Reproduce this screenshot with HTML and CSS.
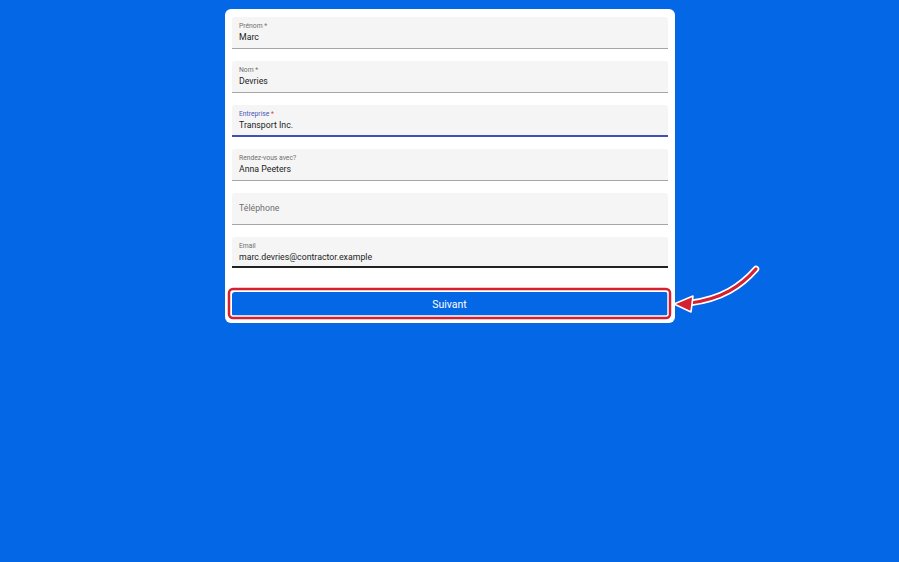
FILE: index.html
```html
<!DOCTYPE html>
<html lang="fr">
<head>
<meta charset="utf-8">
<title>Formulaire visiteur</title>
<link rel="stylesheet" href="styles.css">
</head>
<body>
<div class="page">
  <form class="card">
    <div class="field">
      <div class="label">Prénom *</div>
      <div class="value">Marc</div>
    </div>
    <div class="field">
      <div class="label">Nom *</div>
      <div class="value">Devries</div>
    </div>
    <div class="field focused">
      <div class="label">Entreprise <span class="req">*</span></div>
      <div class="value">Transport Inc.</div>
    </div>
    <div class="field">
      <div class="label">Rendez-vous avec?</div>
      <div class="value">Anna Peeters</div>
    </div>
    <div class="field empty">
      <div class="placeholder">Téléphone</div>
    </div>
    <div class="field dark">
      <div class="label">Email</div>
      <div class="value">marc.devries@contractor.example</div>
    </div>
    <button type="button" class="submit">Suivant</button>
  </form>
</div>
<svg class="annot" width="899" height="562" viewBox="0 0 899 562" aria-hidden="true">
  <g fill="none" stroke-linecap="round" stroke-linejoin="round">
    <rect x="229" y="289" width="441" height="29" rx="4" stroke="#fff" stroke-width="5.5"/>
    <rect x="229" y="289" width="441" height="29" rx="4" stroke="#d4202f" stroke-width="2.5"/>
    <path d="M756 269 C 741 286, 722 299, 690 303" stroke="#fff" stroke-width="6.5"/>
    <path d="M756 269 C 741 286, 722 299, 690 303" stroke="#d4202f" stroke-width="3.2"/>
  </g>
  <polygon points="674,304 693,296 691,312" fill="#d4202f" stroke="#fff" stroke-width="1.6" stroke-linejoin="round"/>
</svg>
</body>
</html>
```

FILE: styles.css
```css
html, body {
  margin: 0;
  padding: 0;
}
body {
  background: #0467e6;
  font-family: Roboto, "Liberation Sans", Arial, sans-serif;
  width: 899px;
  height: 562px;
  overflow: hidden;
  position: relative;
}
.page {
  display: flex;
  justify-content: center;
  padding-top: 9px;
}
.card {
  width: 450px;
  box-sizing: border-box;
  background: #fff;
  border-radius: 6px;
  padding: 8px 7px 6px 7px;
  display: flex;
  flex-direction: column;
  gap: 12px;
  margin: 0;
}
.field {
  background: #f5f5f5;
  border-radius: 3px 3px 0 0;
  border-bottom: 1px solid #a6a6a6;
  padding: 5px 7px 0 7.5px;
  box-sizing: content-box;
  height: 26px;
}
.field.focused {
  border-bottom: 2px solid #3f51b5;
  height: 25px;
}
.field.dark {
  border-bottom: 2px solid #222;
  height: 24px;
}
.field.empty {
  padding-top: 0;
  height: 31px;
  display: flex;
  align-items: center;
}
.label {
  font-size: 6.75px;
  line-height: 8px;
  color: #6f6f6f;
  margin-bottom: 2px;
}
.focused .label {
  color: #4a57b8;
}
.req {
  color: #e53935;
}
.value {
  font-size: 8.75px;
  line-height: 11px;
  color: #1e1e1e;
}
.placeholder {
  font-size: 8.75px;
  line-height: 11px;
  color: #707070;
}
.submit {
  margin-top: 12px;
  height: 25px;
  border: none;
  border-radius: 3px;
  background: #0467e6;
  color: #fff;
  font-family: Roboto, "Liberation Sans", Arial, sans-serif;
  font-size: 10.5px;
  font-weight: 400;
  padding: 0;
}
.annot {
  position: absolute;
  left: 0;
  top: 0;
  pointer-events: none;
}
```
